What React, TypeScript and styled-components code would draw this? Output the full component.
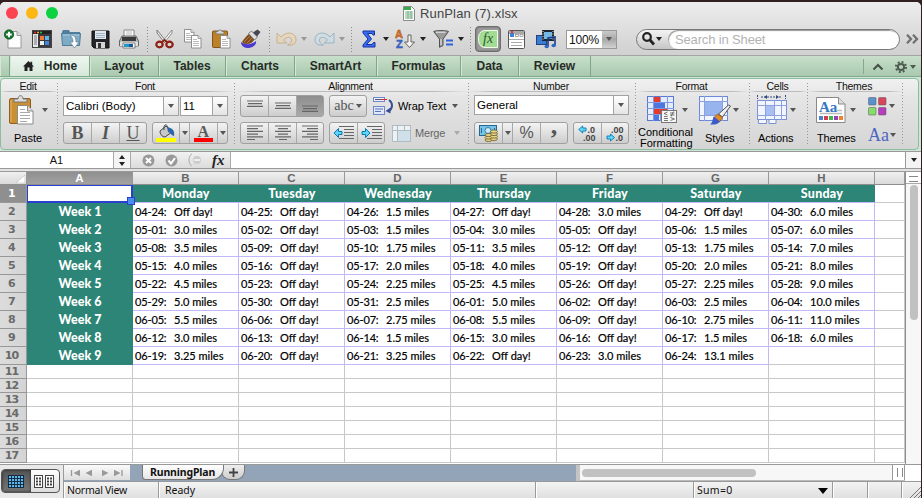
import React from "react";
import styled, { createGlobalStyle, css } from "styled-components";

const UI = '"Liberation Sans", Arial, sans-serif';
const CELL = 'Lato, "Open Sans", sans-serif';
const LUCIDA = '"Noto Sans", "Open Sans", sans-serif';

const Global = createGlobalStyle`
  * { box-sizing: border-box; }
  body { margin: 0; background: #31201f; overflow: hidden; }
  svg { display: block; flex: none; }
`;

const Window = styled.div`
  width: 921px;
  height: 496px;
  margin-top: 2px;
  display: flex;
  flex-direction: column;
  background: #e4e4e4;
  border-radius: 5px 5px 0 0;
  overflow: hidden;
  font-family: ${UI};
  color: #111;
`;

/* ---------- title and toolbar ---------- */
const Chrome = styled.header`
  height: 54px;
  flex: none;
  background: linear-gradient(#ededed, #d0d0d0);
  border-bottom: 1px solid #a4a4a4;
`;
const TitleBar = styled.div`
  display: grid;
  grid-template-columns: 403px 1fr;
  height: 22px;
  align-items: center;
`;
const Lights = styled.div`
  display: flex;
  gap: 8px;
  padding-left: 6px;
`;
const Light = styled.i<{ $c: string }>`
  width: 12px;
  height: 12px;
  border-radius: 50%;
  background: ${(p) => p.$c};
`;
const Title = styled.div`
  display: flex;
  align-items: center;
  gap: 5px;
  font-size: 13px;
  letter-spacing: 0.15px;
  color: #444;
`;
const Toolbar = styled.div`
  display: flex;
  height: 30px;
  align-items: center;
  padding-left: 4px;
`;
const Slot = styled.div<{ $w: number; $ml?: number; $dim?: boolean }>`
  flex: none;
  width: ${(p) => p.$w}px;
  margin-left: ${(p) => p.$ml ?? 0}px;
  display: flex;
  justify-content: center;
  opacity: ${(p) => (p.$dim ? 0.45 : 1)};
`;
const Dots = styled.div<{ $ml?: number }>`
  flex: none;
  width: 1px;
  height: 25px;
  margin-left: ${(p) => p.$ml ?? 0}px;
  background: repeating-linear-gradient(#8c8c8c 0 1px, transparent 1px 3px);
`;
const Caret = styled.i<{ $c?: string; $ml?: number; $s?: number }>`
  flex: none;
  width: 0;
  height: 0;
  margin-left: ${(p) => p.$ml ?? 0}px;
  border: ${(p) => p.$s ?? 3}px solid transparent;
  border-top: ${(p) => (p.$s ?? 3) + 1}px solid ${(p) => p.$c ?? "#555"};
  border-bottom: 0;
`;
const FxToggle = styled.div`
  width: 26px;
  height: 26px;
  margin-left: 4px;
  border: 1px solid #6d6d6d;
  border-radius: 4px;
  background: #9b9b9b;
  box-shadow: inset 0 0 2px #555;
  display: flex;
  align-items: center;
  justify-content: center;
  flex: none;
`;
const Zoom = styled.div`
  display: flex;
  margin-left: 9px;
  width: 51px;
  height: 19px;
  flex: none;
  border: 1px solid #999;
  background: #fff;
  font-size: 12px;
  letter-spacing: -0.2px;
  line-height: 18px;
  padding-left: 2px;
`;
const ZoomBtn = styled.div`
  margin-left: auto;
  width: 14px;
  background: linear-gradient(#c9c9c9, #a9a9a9 50%, #d2d2d2);
  display: flex;
  align-items: center;
  justify-content: center;
`;
const Search = styled.div`
  display: flex;
  align-items: center;
  margin-left: 19px;
  width: 264px;
  height: 21px;
  flex: none;
  border: 1px solid #777;
  border-radius: 11px;
  background: linear-gradient(#f4f4f4, #c6c6c6);
  padding-left: 5px;
  overflow: hidden;
`;
const SearchInput = styled.div`
  margin-left: 6px;
  height: 19px;
  flex: 1;
  border-radius: 10px;
  background: #fff;
  box-shadow: inset 1px 1px 1px #999;
  color: #b3b3b3;
  font-size: 13px;
  letter-spacing: -0.15px;
  line-height: 20px;
  padding-left: 7px;
`;

/* ---------- tabs ---------- */
const TabBar = styled.nav`
  display: flex;
  height: 21px;
  flex: none;
  background: linear-gradient(#c8dfcb, #a9c9ae);
  border-bottom: 1px solid #85a98d;
`;
const Tab = styled.div<{ $w: number; $active?: boolean }>`
  width: ${(p) => p.$w}px;
  flex: none;
  display: flex;
  align-items: center;
  justify-content: center;
  gap: 10px;
  font-size: 12px;
  font-weight: bold;
  color: #272b28;
  border-right: 1px solid #7fa488;
  box-shadow: inset 1px 0 #d5e8d8;
  ${(p) => p.$active && css`background: linear-gradient(#eff7f0, #d5e8d8); padding-left: 1px;`}
`;
const TabTools = styled.div`
  margin: 3px 5px 2px auto;
  border-left: 1px solid #86a98d;
  padding-left: 8px;
  display: flex;
  align-items: center;
`;

/* ---------- ribbon ---------- */
const RibbonFrame = styled.div`
  height: 74px;
  flex: none;
  background: #cfe6d6;
  padding: 1px 2px 1px 0;
`;
const Ribbon = styled.section`
  height: 72px;
  display: flex;
  border: 1px solid #8dbd9f;
  border-radius: 4px;
  background: linear-gradient(#f0f0f0, #e4e4e4 30%, #d5d5d5);
`;
const Group = styled.div<{ $w: number }>`
  width: ${(p) => p.$w}px;
  flex: none;
  padding-right: 1px;
  background: repeating-linear-gradient(#999 0 1px, transparent 1px 3px) right 4px / 1px 63px no-repeat;
  font-size: 11px;
`;
const GroupTitle = styled.div`
  height: 13px;
  line-height: 14px;
  font-size: 10.5px;
  letter-spacing: -0.25px;
  padding-right: 2px;
  text-align: center;
  color: #111;
  border-bottom: 1px solid;
  border-image: linear-gradient(90deg, transparent, #bbb 15%, #bbb 85%, transparent) 1;
`;
const Row = styled.div<{ $pl?: number; $h?: number; $mt?: number }>`
  display: flex;
  align-items: center;
  height: ${(p) => p.$h ?? 22}px;
  margin-top: ${(p) => p.$mt ?? 0}px;
  padding-left: ${(p) => p.$pl ?? 0}px;
`;
const Select = styled.div<{ $w: number; $ml?: number }>`
  width: ${(p) => p.$w}px;
  margin-left: ${(p) => p.$ml ?? 0}px;
  height: 20px;
  flex: none;
  border: 1px solid #a2a2a2;
  background: #fff;
  display: flex;
  line-height: 18px;
  font-size: 11.5px;
  padding-left: 2px;
  color: #000;
`;
const SelectBtn = styled.div`
  width: 15px;
  margin-left: auto;
  border-left: 1px solid #a2a2a2;
  background: linear-gradient(#fff, #e4e4e4);
  display: flex;
  align-items: center;
  justify-content: center;
`;
const Segment = styled.div<{ $ml?: number }>`
  display: flex;
  height: 22px;
  flex: none;
  margin-left: ${(p) => p.$ml ?? 0}px;
  border: 1px solid #a0a0a0;
  border-radius: 3px;
  background: linear-gradient(#f3f3f3, #cdcdcd);
`;
const Key = styled.div<{ $w: number; $on?: boolean }>`
  width: ${(p) => p.$w}px;
  display: flex;
  align-items: center;
  justify-content: center;
  & + & { border-left: 1px solid #a8a8a8; }
  ${(p) => p.$on && css`background: linear-gradient(#8e8e8e, #a9a9a9);`}
`;
const Glyph = styled.span<{ $it?: boolean; $ul?: boolean; $b?: boolean; $s?: number; $c?: string }>`
  font-family: "Liberation Serif", "Times New Roman", serif;
  font-size: ${(p) => p.$s ?? 18}px;
  line-height: 18px;
  color: ${(p) => p.$c ?? "#555"};
  font-weight: ${(p) => (p.$b ? "bold" : "normal")};
  font-style: ${(p) => (p.$it ? "italic" : "normal")};
  text-decoration: ${(p) => (p.$ul ? "underline" : "none")};
  text-decoration-thickness: 1px;
`;
const Comma = styled(Glyph)`
  margin-top: -15px;
`;
const Label = styled.span<{ $s?: number; $ml?: number; $c?: string; $ls?: number }>`
  font-size: ${(p) => p.$s ?? 12}px;
  margin-left: ${(p) => p.$ml ?? 0}px;
  color: ${(p) => p.$c ?? "#000"};
  letter-spacing: ${(p) => p.$ls ?? 0}px;
  white-space: nowrap;
`;
const Columns = styled.div`
  display: flex;
`;
const Big = styled.div<{ $w: number; $ml?: number }>`
  width: ${(p) => p.$w}px;
  margin-left: ${(p) => p.$ml ?? 0}px;
  flex: none;
  display: flex;
  flex-direction: column;
`;
const BigPic = styled.div<{ $pl?: number }>`
  height: 36px;
  display: flex;
  align-items: center;
  gap: 4px;
  padding-left: ${(p) => p.$pl ?? 0}px;
`;
const BigLabel = styled.div<{ $two?: boolean; $pl?: number; $ls?: number }>`
  font-size: 11px;
  color: #000;
  white-space: nowrap;
  letter-spacing: ${(p) => p.$ls ?? 0}px;
  padding-left: ${(p) => p.$pl ?? 0}px;
  line-height: ${(p) => (p.$two ? 11 : 20)}px;
  margin-top: ${(p) => (p.$two ? -1 : 0)}px;
`;
const LabelLine = styled.div<{ $pl?: number }>`
  padding-left: ${(p) => p.$pl ?? 0}px;
`;

/* ---------- formula bar ---------- */
const FormulaBar = styled.div`
  height: 18px;
  flex: none;
  display: flex;
  background: #fff;
  border-top: 1px solid #999;
  border-bottom: 1px solid #999;
`;
const NameBox = styled.div`
  width: 113px;
  text-align: center;
  font-size: 11px;
  line-height: 17px;
`;
const Stepper = styled.div`
  width: 18px;
  border-left: 1px solid #aaa;
  border-right: 1px solid #aaa;
  background: #f4f4f4;
  display: flex;
  align-items: center;
  justify-content: center;
`;
const FxTools = styled.div`
  width: 100px;
  padding-left: 11px;
  background: linear-gradient(#f1f1f1, #dcdcdc);
  border-right: 1px solid #aaa;
  display: flex;
  align-items: center;
  gap: 10px;
`;
const FormulaDrop = styled.div`
  width: 16px;
  margin-left: auto;
  border-left: 1px solid #999;
  background: #f4f4f4;
  display: flex;
  align-items: center;
  justify-content: center;
`;
const Strip = styled.div`
  height: 3px;
  flex: none;
  background: #e3e3e3;
  border-bottom: 1px solid #999;
`;

/* ---------- sheet ---------- */
const SheetArea = styled.main`
  display: flex;
  height: 292px;
  flex: none;
  background: #fff;
`;
const Grid = styled.div`
  display: grid;
  width: 905px;
  grid-template-columns: 27px repeat(8, 106px) 30px;
  grid-template-rows: 13px repeat(10, 18px) repeat(7, 14px) 1px;
  overflow: hidden;
`;
const ColHead = styled.div<{ $on?: boolean }>`
  display: flex;
  align-items: center;
  justify-content: center;
  font: bold 11.5px/12px ${UI};
  color: ${(p) => (p.$on ? "#fff" : "#666")};
  background: ${(p) => (p.$on ? "linear-gradient(#8f8f8f, #a2a2a2)" : "linear-gradient(#f0f0f0, #dadada)")};
  border-right: 1px solid #989898;
  border-bottom: 1px solid #8e8e8e;
`;
const Corner = styled(ColHead)`
  justify-content: flex-end;
  align-items: flex-end;
  padding: 0 1px 1px 0;
`;
const RowHead = styled.div<{ $on?: boolean }>`
  display: flex;
  align-items: center;
  justify-content: center;
  padding-right: 3px;
  font: bold 11px/12px "DejaVu Sans", sans-serif;
  letter-spacing: -0.8px;
  color: ${(p) => (p.$on ? "#fff" : "#6a6a6a")};
  background: ${(p) => (p.$on ? "#8f8f8f" : "linear-gradient(90deg, #dcdcdc, #d4d4d4)")};
  border-right: 1px solid #989898;
  border-bottom: 1px solid #989898;
`;
const Cell = styled.div<{ $line?: string }>`
  display: grid;
  grid-template-columns: 39px 1fr;
  padding-left: 2px;
  font: 11px/17px ${CELL};
  color: #000;
  -webkit-text-stroke: 0.2px #000;
  white-space: nowrap;
  border-right: 1px solid ${(p) => p.$line ?? "#c8c8c8"};
  border-bottom: 1px solid ${(p) => p.$line ?? "#c8c8c8"};
`;
const DateText = styled.span`
  letter-spacing: -0.15px;
`;
const HeadCell = styled.div<{ $lined?: boolean }>`
  background: #2c8576;
  color: #fff;
  text-align: center;
  font: 900 12.5px/17px ${CELL};
  letter-spacing: ${(p) => (p.$lined ? 0.25 : 0)}px;
  border-bottom: 1px solid ${(p) => (p.$lined ? "#c3b9fa" : "#2c8576")};
`;
const Selected = styled.div`
  position: relative;
  background: #fff;
  border: 1px solid #2a3fcf;
  border-bottom-width: 2px;
  border-right-width: 2px;
  &::after {
    content: "";
    position: absolute;
    right: -4px;
    bottom: -4px;
    width: 6px;
    height: 6px;
    background: #4a8cf0;
    border: 1px solid #2a3fcf;
    z-index: 2;
  }
`;
const VScroll = styled.div`
  width: 16px;
  border-left: 1px solid #8e8e8e;
  background: #f7f7f7;
  display: flex;
  flex-direction: column;
`;
const VSplit = styled.div`
  height: 12px;
  flex: none;
  border-bottom: 1px solid #aaa;
  padding: 4px 3px;
  background: #fff;
  &::before {
    content: "";
    display: block;
    height: 4px;
    border-top: 1px solid #888;
    border-bottom: 1px solid #888;
  }
`;
const VThumb = styled.div`
  width: 8px;
  height: 135px;
  margin: 1px 0 0 4px;
  border-radius: 4px;
  background: #c1c1c1;
`;

/* ---------- bottom ---------- */
const Footer = styled.footer`
  display: grid;
  grid-template-columns: 64px 1fr;
  height: 34px;
  flex: none;
  border-top: 1px solid #999;
`;
const Views = styled.div`
  background: #e9e9e9;
  border-right: 1px solid #999;
  padding: 4px 0 0 1px;
`;
const ViewSwitch = styled.div`
  width: 59px;
  height: 24px;
  border: 1px solid #555;
  border-radius: 4px;
  display: flex;
  overflow: hidden;
  background: linear-gradient(#fff, #dcdcdc);
`;
const ViewBtn = styled.div<{ $on?: boolean }>`
  flex: 1;
  display: flex;
  align-items: center;
  justify-content: center;
  ${(p) => p.$on && css`background: linear-gradient(#555, #777); box-shadow: inset 0 0 3px #222;`}
`;
const FooterMain = styled.div`
  display: flex;
  flex-direction: column;
`;
const SheetBar = styled.div`
  display: flex;
  height: 16px;
  background: #94a4b8;
`;
const NavKeys = styled.div`
  width: 66px;
  height: 15px;
  background: linear-gradient(#fafafa, #dedede);
  display: flex;
  align-items: center;
  justify-content: center;
`;
const SheetTab = styled.div`
  width: 82px;
  height: 15px;
  margin-left: 12px;
  background: linear-gradient(#fff, #e6e6e6);
  border: 1px solid #777;
  border-top: 0;
  border-radius: 0 0 12px 4px;
  font: bold 10.5px/14px ${LUCIDA};
  letter-spacing: -0.15px;
  padding-left: 7px;
  color: #111;
  z-index: 1;
`;
const AddTab = styled.div`
  width: 24px;
  height: 15px;
  margin-left: -3px;
  border: 1px solid #777;
  border-top: 0;
  border-radius: 0 0 9px 9px;
  background: linear-gradient(#eee, #ccc);
  display: flex;
  align-items: center;
  justify-content: center;
`;
const HScroll = styled.div`
  margin-left: auto;
  width: 329px;
  background: #f7f7f7;
  display: flex;
  border-left: 4px solid #c4c4c4;
  border-bottom: 1px solid #bbb;
`;
const HThumb = styled.div`
  width: 174px;
  height: 8px;
  margin: 4px 0 0 2px;
  border-radius: 4px;
  background: #c1c1c1;
`;
const HSplit = styled.div`
  margin-left: auto;
  width: 13px;
  border-left: 1px solid #999;
  border-right: 1px solid #999;
  padding: 3px 4px;
  background: #fff;
  &::before {
    content: "";
    display: block;
    width: 4px;
    height: 9px;
    border-left: 1px solid #888;
    border-right: 1px solid #888;
  }
`;
const ScrollCorner = styled.div`
  width: 16px;
  background: #fff;
`;
const Status = styled.div`
  flex: 1;
  display: flex;
  border-top: 1px solid #999;
  background: linear-gradient(#f3f3f3, #dedede);
  font: 10.5px/17px ${LUCIDA};
`;
const StatusCell = styled.div<{ $w?: number; $pl?: number; $ls?: number }>`
  ${(p) => (p.$w ? css`width: ${p.$w}px; flex: none;` : css`flex: 1;`)}
  padding: 0 4px 0 ${(p) => p.$pl ?? 3}px;
  letter-spacing: ${(p) => p.$ls ?? 0}px;
  white-space: nowrap;
  border-right: 1px solid #999;
  box-shadow: inset 1px 0 #fff;
  display: flex;
  align-items: center;
  justify-content: space-between;
`;
const ResizeCell = styled(StatusCell)`
  justify-content: flex-end;
  align-items: flex-end;
  padding: 0;
  border-right: 0;
`;

/* ---------- icons ---------- */
type SvgP = { w: number; h: number; children: React.ReactNode };
const Svg = ({ w, h, children }: SvgP) => (
  <svg width={w} height={h} viewBox={`0 0 ${w} ${h}`} fill="none">{children}</svg>
);

const DocIcon = () => (
  <Svg w={12} h={15}>
    <path d="M.5 .5h8l3 3v11H.5z" fill="#fff" stroke="#8a8a8a" />
    <path d="M1 1h7v3H1z" fill="#37ab4c" />
    <path d="M2 6h8M2 8h8M2 10h8M2 12h8M5 5v8M8 5v8" stroke="#79b184" />
  </Svg>
);
const NewIcon = () => (
  <Svg w={18} h={20}>
    <path d="M4 2.5h9l4 4V19H4z" fill="#fdfdfd" stroke="#9a9a9a" />
    <path d="M13 2.5v4h4" fill="#ddd" stroke="#9a9a9a" />
    <circle cx="5" cy="5.5" r="4.7" fill="#16752e" stroke="#0d4d1d" strokeWidth=".7" />
    <path d="M5 2.7v5.6M2.2 5.5h5.6" stroke="#fff" strokeWidth="2" />
  </Svg>
);
const GalleryIcon = () => (
  <Svg w={20} h={18}>
    <rect x=".5" y=".5" width="19" height="17" fill="#e8e8e8" stroke="#444" />
    <rect x="1" y="1" width="18" height="3" fill="#222" />
    <circle cx="3" cy="2.5" r="1" fill="#e33" /><circle cx="6" cy="2.5" r="1" fill="#fb2" /><circle cx="9" cy="2.5" r="1" fill="#3c4" />
    <rect x="6" y="4" width="13" height="13" fill="#3b3b3f" />
    <path d="M2 6h3M2 8h3M2 10h3M2 12h3M2 14h3" stroke="#777" />
    <rect x="8" y="6" width="4" height="4" fill="#f57b34" /><rect x="13" y="6" width="4" height="4" fill="#5db6ee" />
    <rect x="8" y="11" width="4" height="4" fill="#eee" /><rect x="13" y="11" width="4" height="4" fill="#3c86dc" />
  </Svg>
);
const FolderIcon = () => (
  <Svg w={21} h={20}>
    <path d="M1 3l1-2h6l1 2h10v2H1z" fill="#4f7f9e" />
    <path d="M.5 4.5h19l-1 12h-17z" fill="#7eabc6" stroke="#4d7a97" />
    <path d="M2 6h16" stroke="#a9cbdd" />
    <path d="M9 6c5 0 6 3 6 7h3l-4.500 6L9 13h3c0-3-1-5-3-7z" fill="#fff" stroke="#607f91" strokeWidth=".7" />
  </Svg>
);
const SaveIcon = () => (
  <Svg w={19} h={19}>
    <path d="M1 1h17v17H3l-2-2z" fill="#24252a" stroke="#111" />
    <rect x="4" y="1" width="11" height="8" fill="#dfe8f1" />
    <path d="M5 3.500h9M5 5.500h9M5 7.500h9" stroke="#94a5b5" strokeWidth=".8" />
    <rect x="5" y="12" width="9" height="6" fill="#d5d5d5" /><rect x="7" y="13" width="3" height="5" fill="#333" />
  </Svg>
);
const PrintIcon = () => (
  <Svg w={20} h={20}>
    <path d="M5 8V1h10v7" fill="#fff" stroke="#888" />
    <path d="M7 3h6M7 5h6" stroke="#bbb" />
    <path d="M3 7h14l2.500 5v5H.5v-5z" fill="#b9b9b9" stroke="#666" />
    <rect x="3" y="8" width="14" height="4" fill="#3a3a3a" />
    <path d="M1 13h18v4H1z" fill="#e0e0e0" />
    <path d="M4 14h12v5H4z" fill="#fff" stroke="#555" strokeWidth=".7" />
    <path d="M5 15h5v3H5z" fill="#1b9ccb" /><path d="M10 15h4v3h-4z" fill="#1a5597" />
  </Svg>
);
const CutIcon = () => (
  <Svg w={19} h={20}>
    <path d="M2 1l9 11-1.500 1.500L2 4z" fill="#e5e5e5" stroke="#666" strokeWidth=".8" />
    <path d="M17 1L8 12l1.500 1.500L17 4z" fill="#fafafa" stroke="#777" strokeWidth=".8" />
    <ellipse cx="4.500" cy="15.500" rx="3.200" ry="2.800" stroke="#8e1f12" strokeWidth="2.200" />
    <ellipse cx="14.500" cy="15.500" rx="3.200" ry="2.800" stroke="#8e1f12" strokeWidth="2.200" />
    <path d="M7 13l2.500-2 2.500 2" stroke="#8e1f12" strokeWidth="2" />
  </Svg>
);
const Page = ({ x, y }: { x: number; y: number }) => (
  <g transform={`translate(${x} ${y})`}>
    <path d="M.5 .5h6.500l3 3v9.500H.5z" fill="#fff" stroke="#858585" strokeWidth=".9" />
    <path d="M7 .5v3h3" fill="#ddd" stroke="#858585" strokeWidth=".7" />
    <path d="M2 4.500h4M2 6.500h6M2 8.500h6M2 10.500h6" stroke="#aaa" strokeWidth=".8" />
  </g>
);
const CopyIcon = () => <Svg w={19} h={20}><Page x={1} y={0} /><Page x={8} y={6} /></Svg>;
const PasteIcon = () => (
  <Svg w={19} h={20}>
    <rect x=".5" y="2" width="15" height="16.500" rx="1" fill="#bd8128" stroke="#83551a" />
    <path d="M4 5V2.500h2C6 .5 10 .5 10 2.500h2V5z" fill="#d6d6d6" stroke="#6e6e6e" strokeWidth=".8" />
    <Page x={8} y={6} />
  </Svg>
);
const BrushIcon = () => (
  <Svg w={21} h={20}>
    <path d="M1 13c5 3 10 3 15-1 1 4-4 7.500-9 7-4-.5-6-3-6-6z" fill="#4a3ad0" />
    <path d="M2 13c2-3 4-6 7-8l5.500 5.500c-2 3-4.500 4.500-7.500 4.500-2 0-4-1-5-2z" fill="#7f4d22" />
    <path d="M4 13l6-6M7 14l5-5" stroke="#bb7c3d" />
    <path d="M8.500 4.500L11.500 2l6 6-3 3z" fill="#dedede" stroke="#555" strokeWidth=".7" />
    <path d="M13 3.500L17.500 .5l3 2.500-3.500 4.500z" fill="#464650" />
  </Svg>
);
const Undo = () => (
  <Svg w={21} h={16}>
    <path d="M1 2v10h10L7.500 9C11 5 15.500 6 15.500 9c0 2-1 4-4 5 6 1 9-2 8.500-6C19.500 1 10 0 5 6z" fill="#f2d29a" stroke="#b5823a" />
  </Svg>
);
const Redo = () => (
  <Svg w={21} h={16}>
    <path d="M20 2v10H10l3.500-3C10 5 5.500 6 5.500 9c0 2 1 4 4 5-6 1-9-2-8.500-6C1.500 1 11 0 16 6z" fill="#c3dfed" stroke="#4f88ab" />
  </Svg>
);
const Sigma = () => (
  <Svg w={14} h={18}>
    <path d="M1 1h11.500v4H11l-1-1.500H5.500L9.500 9l-5 5.500H10l1.500-2H13V17H1v-2l5-6-5-6z" fill="#3a6cf0" stroke="#1432a8" />
  </Svg>
);
const SortIcon = () => (
  <Svg w={21} h={22}>
    <text x="0" y="10" fontFamily="Liberation Sans" fontWeight="bold" fontSize="11" fill="#dd7426" stroke="#9a4610" strokeWidth=".4">A</text>
    <text x="1" y="20" fontFamily="Liberation Sans" fontWeight="bold" fontSize="11" fill="#3f74dd" stroke="#1f409a" strokeWidth=".4">Z</text>
    <path d="M13 7h3v7h3.500l-5 5.500-5-5.500H13z" fill="#f2f2f2" stroke="#555" strokeWidth=".9" />
  </Svg>
);
const FunnelIcon = () => (
  <Svg w={21} h={18}>
    <path d="M.7 1.500C3 .3 13 .3 15.500 1.500L10 9v6.500l-3.500 1.800V9z" fill="#999" stroke="#4f4f4f" />
    <path d="M3 2.200h9.500" stroke="#eee" /><path d="M8 9v6" stroke="#eee" />
    <path d="M13 10.500h7M13 14.500h7" stroke="#2f63d9" strokeWidth="2" />
  </Svg>
);
const FxIcon = () => (
  <Svg w={20} h={18}>
    <path d="M7 .5h12.500v17H7C2 17.500.5 13 .5 9S2 .5 7 .5z" fill="#a5dc94" stroke="#f1fbee" />
    <text x="5" y="13" fontFamily="Liberation Serif" fontStyle="italic" fontSize="14" fill="#1f5c2a">fx</text>
  </Svg>
);
const ToolboxIcon = () => (
  <Svg w={17} h={19}>
    <rect x=".5" y=".5" width="16" height="18" rx="1" fill="#fff" stroke="#555" />
    <rect x="1" y="1" width="15" height="3" fill="#a9a9a9" />
    <rect x="2" y="3" width="4" height="4" fill="#3b82dc" /><circle cx="4" cy="2" r="1.200" fill="#e33" />
    <rect x="7.500" y="4.500" width="3" height="2" stroke="#888" strokeWidth=".7" /><rect x="12" y="4.500" width="3" height="2" stroke="#888" strokeWidth=".7" />
    <path d="M1 9.500h15M3 12.500h11M3 15.500h11" stroke="#aaa" />
  </Svg>
);
const MediaIcon = () => (
  <Svg w={21} h={19}>
    <rect x=".5" y="5.500" width="10" height="9" fill="#3c7bd0" stroke="#1c4489" />
    <rect x="6" y="0" width="12" height="11" fill="#1c2630" /><rect x="8" y="2" width="8" height="7" fill="#76b8df" />
    <path d="M7 1v10M17 1v10" stroke="#ddd" strokeDasharray="1 1.500" />
    <path d="M12 16V8l7-1v8" stroke="#173c86" strokeWidth="1.600" />
    <ellipse cx="10.700" cy="16.500" rx="2.200" ry="1.700" fill="#2e66c5" /><ellipse cx="17.700" cy="15.500" rx="2.200" ry="1.700" fill="#2e66c5" />
  </Svg>
);
const Magnifier = () => (
  <Svg w={13} h={14}>
    <circle cx="5" cy="5" r="3.800" stroke="#222" strokeWidth="2.200" /><path d="M8 8l4 4.500" stroke="#222" strokeWidth="2.800" />
  </Svg>
);
const More = () => (
  <Svg w={13} h={10}>
    <path d="M1 .8L5 5 1 9.200M7 .8L11 5 7 9.200" stroke="#707070" strokeWidth="2.300" />
  </Svg>
);
const HomeIcon = () => (
  <Svg w={11} h={10}>
    <path d="M5.500 0L7.500 2V.7h1.700v3L11 5.500H9.500V10h-3V6.500h-2V10h-3V5.500H0z" fill="#222" />
  </Svg>
);
const ChevronUp = () => <Svg w={12} h={8}><path d="M1.500 6.500L6 2l4.500 4.500" stroke="#445047" strokeWidth="2" /></Svg>;
const Gear = () => (
  <Svg w={12} h={12}>
    <circle cx="6" cy="6" r="3.100" stroke="#4e5b51" strokeWidth="2" />
    <circle cx="6" cy="6" r="5" stroke="#4e5b51" strokeWidth="2" strokeDasharray="1.960 1.960" />
  </Svg>
);
const BigPaste = () => (
  <Svg w={25} h={30}>
    <rect x=".5" y="3.500" width="21" height="25" rx="1.500" fill="#c98f32" stroke="#8d5e1e" />
    <path d="M2 5v22" stroke="#e2b567" />
    <path d="M5 7V4h4C9-.5 14-.5 14 4h4v3z" fill="#dcdcdc" stroke="#777" />
    <path d="M8.500 10.500h10l5.500 5.500v13H8.500z" fill="#fff" stroke="#8b8b8b" />
    <path d="M18.500 10.500V16H24" fill="#ddd" stroke="#8b8b8b" />
    <path d="M11 14.500h5M11 17.500h10M11 20.500h10M11 23.500h10M11 26.500h7" stroke="#a9a9a9" />
  </Svg>
);
const BucketIcon = () => (
  <Svg w={20} h={18}>
    <path d="M4 7l6-5 6 6-7 5c-3 0-5-3-5-6z" fill="#c8c8c8" stroke="#444" />
    <path d="M8 6C7 0 11-1 12 4" stroke="#444" /><path d="M11 3c6 1 8 4 7 9-2 0-3-3-6-4z" fill="#2c66a8" />
    <rect x="0" y="14" width="20" height="4" fill="#ff0" />
  </Svg>
);
const FontColor = () => (
  <Svg w={19} h={18}>
    <text x="3.500" y="13" fontFamily="Liberation Serif" fontWeight="bold" fontSize="16" fill="#5a5a5a">A</text>
    <rect x="0" y="14" width="19" height="4" fill="#f00" />
  </Svg>
);
const Lines = ({ rows, y = 2, color = "#666" }: { rows: [number, number][]; y?: number; color?: string }) => (
  <Svg w={18} h={18}>
    {rows.map(([a, b], i) => <path key={i} d={`M${a} ${y + i * 2.700}H${b}`} stroke={color} strokeWidth="1.200" />)}
  </Svg>
);
const full: [number, number] = [1, 17];
const Indent = ({ flip }: { flip?: boolean }) => (
  <Svg w={21} h={16}>
    <path d="M6 1.500h15M11 4.500h10M11 7.500h10M11 10.500h10M6 13.500h15" stroke="#666" />
    <path d={flip ? "M9 8L4.500 3.500v3H1v3h3.500v3z" : "M1 8l4.500-4.500v3H9v3H5.500v3z"} fill="#5fd4f7" stroke="#0879b4" />
  </Svg>
);
const WrapIcon = () => (
  <Svg w={21} h={18}>
    <rect x=".5" y=".5" width="11" height="4" fill="#eef3ff" stroke="#6f88c8" /><path d="M2 2.500h7" stroke="#557" /><path d="M9 2.500h5" stroke="#e22" />
    <rect x=".5" y="9.500" width="11" height="8" fill="#dfe9fb" stroke="#6f88c8" /><path d="M2 12h8M2 14.500h6" stroke="#5672b5" />
    <path d="M16 3c4 3 4 8 0 11" stroke="#3b4d94" strokeWidth="2" /><path d="M12.500 14l5-3.500v6z" fill="#3b4d94" />
  </Svg>
);
const MergeIcon = () => (
  <Svg w={19} h={17}>
    <rect x=".5" y=".5" width="18" height="16" fill="#eef1f3" stroke="#afbbc2" />
    <path d="M5.500 1v15M1 5.500h17M12.500 1v5" stroke="#afbbc2" /><rect x="6" y="6" width="12" height="10" fill="#cfe0eb" />
  </Svg>
);
const MoneyIcon = () => (
  <Svg w={20} h={17}>
    <rect x=".5" y=".5" width="17" height="10" fill="#75c3ea" stroke="#23668f" />
    <circle cx="9" cy="5.500" r="3" fill="#c7ebfa" stroke="#23668f" strokeWidth=".8" /><path d="M2.500 3v5M15.500 3v5" stroke="#2b6b94" />
    {[15, 12.500, 10].map((y) => <ellipse key={y} cx="9.500" cy={y} rx="3.500" ry="1.600" fill="#e0cd83" stroke="#70602a" strokeWidth=".8" />)}
    {[14, 11.500, 9, 6.500].map((y) => <ellipse key={y} cx="15" cy={y} rx="3.500" ry="1.600" fill="#e6d48c" stroke="#70602a" strokeWidth=".8" />)}
  </Svg>
);
const Decimals = ({ more }: { more?: boolean }) => (
  <Svg w={19} h={17}>
    <g fontFamily="Liberation Sans" fontWeight="bold" fontSize="9" fill="#444">
      <text x={more ? 5 : 9.500} y="7.500">{more ? ".00" : ".0"}</text><text x={more ? 9.500 : 5} y="16">{more ? ".0" : ".00"}</text>
    </g>
    <path d={more ? "M8.500 12.500L4.500 9v2H1v3h3.500v2z" : "M.7 4.500l4-3.500v2H8v3H4.700v2z"} fill="#62d7f8" stroke="#0879b4" strokeWidth=".9" />
  </Svg>
);
const CondIcon = () => (
  <Svg w={31} h={28}>
    <rect x=".5" y=".5" width="26" height="24" fill="#e4ecff" stroke="#5c78ce" />
    <rect x="7" y="1" width="6" height="6" fill="#e63b2c" /><rect x="7" y="7" width="11" height="6" fill="#4d77df" />
    <rect x="7" y="13" width="13" height="6" fill="#e63b2c" /><rect x="7" y="19" width="5" height="6" fill="#4d77df" />
    <path d="M6.500 0v25M13.500 0v6M13.500 19v6M20.500 0v25M0 6.500h27M0 12.500h27M0 18.500h27" stroke="#7f98e0" />
    <rect x="14.500" y="14.500" width="15" height="12" fill="#f7f7f7" stroke="#777" />
    <path d="M20.500 16l-3.500 1.500 3.500 1.500M17 20.500h3.500M23 17h4.500M23 19h4.500M26.500 15.500l-2.500 5M17 22.500h4M17 24.500h4M23.500 21.500l4 1.500-4 1.500" stroke="#555" strokeWidth=".8" />
  </Svg>
);
const StylesIcon = () => (
  <Svg w={33} h={31}>
    <rect x=".5" y="1.500" width="28" height="24" fill="#f0f5ff" stroke="#6d88d8" />
    <path d="M5.500 1v25M23.500 1v25M0 6.500h29M0 20.500h29" stroke="#8ba1df" /><rect x="6" y="7" width="17" height="13" fill="#96b4ee" />
    <path d="M31.500 11l-8 11-4-3 10-9z" fill="#eee" stroke="#555" />
    <path d="M18.500 19l5 3.500-3 4.500-6-4z" fill="#e28a22" stroke="#8e4e10" strokeWidth=".7" />
    <path d="M15 21.500l6 5C18 30.500 14 29.500 11 29.500c3-2 2-5 4-8z" fill="#3b5bcb" />
  </Svg>
);
const ActionsIcon = () => (
  <Svg w={31} h={30}>
    <path d="M.5 0v4M28.500 0v4M4 2h21" stroke="#334a7a" strokeDasharray="2 1" /><path d="M7 2l3-2v4zM22 2l-3-2v4z" fill="#334a7a" />
    <rect x=".5" y="5.500" width="29" height="19" fill="#f1f5ff" stroke="#7b90d6" />
    <path d="M1.500 24.500h8v4h-8zM12 24.500h7v4h-7z" fill="#f5f7ff" stroke="#7b90d6" />
    <path d="M8.500 5v20M17.500 5v20M24.500 5v20M0 10.500h30M0 20.500h30" stroke="#8fa2de" /><rect x="9" y="11" width="8" height="9" fill="#a9bff3" />
  </Svg>
);
const ThemesIcon = () => (
  <Svg w={30} h={27}>
    <path d="M.5 .5h22l6.500 6.500v18.500H.5z" fill="#fff" stroke="#888" /><path d="M22.500 .5V7H29" fill="#ddd" stroke="#888" />
    <text x="3" y="15" fontFamily="Liberation Serif" fontSize="15" fontWeight="bold" fill="#3477c4">Aa</text>
    <path d="M21 13.500h5M4 16.500h22" stroke="#bbb" strokeWidth="1.500" />
    {["#4b83c4", "#d33d4e", "#3fb54b", "#9b3eb8", "#ef8133"].map((c, i) => <rect key={c} x={3 + i * 5} y="19" width="4" height="4" fill={c} />)}
  </Svg>
);
const Swatches = () => (
  <Svg w={19} h={19}>
    {[["#5b91cc", 0, 0], ["#d7465a", 10, 0], ["#86dd6b", 0, 10], ["#b63dbb", 10, 10]].map(([c, x, y]) => (
      <rect key={c} x={Number(x) + 0.5} y={Number(y) + 0.5} width="7.500" height="7.500" rx="1" fill={String(c)} stroke="#555" strokeOpacity=".5" />
    ))}
  </Svg>
);
const UpDown = () => <Svg w={6} h={11}><path d="M3 0l3 4H0zM3 11l3-4H0z" fill="#222" /></Svg>;
const Round = ({ ok }: { ok?: boolean }) => (
  <Svg w={13} h={13}>
    <circle cx="6.500" cy="6.500" r="6" fill="#999" />
    <path d={ok ? "M3.500 6.500l2.500 3 4-5.500" : "M4 4l5 5M9 4l-5 5"} stroke="#fff" strokeWidth="2" />
  </Svg>
);
const HalfRound = () => (
  <Svg w={14} h={14}>
    <path d="M4 .8C0 3 0 11 4 13.200" stroke="#aaa" /><circle cx="9" cy="7" r="4" fill="#ccc" /><path d="M6 7h6" stroke="#eee" strokeWidth="2" />
  </Svg>
);
const NavIcon = () => (
  <Svg w={54} h={8}>
    <path d="M1.500 1v6M52 1v6" stroke="#999" strokeWidth="1.300" />
    <path d="M10 .8v6.400L3.500 4zM22 .8v6.400L15.500 4zM32 .8v6.400L38.500 4zM44 .8v6.400L50.500 4z" fill="#999" />
  </Svg>
);
const NormalView = () => (
  <Svg w={16} h={13}>
    <rect x="0" y="0" width="16" height="13" fill="#122c42" />
    {[1, 4, 7, 10].map((y) => <path key={y} d={`M1 ${y + 1}h14`} stroke="#5db8f0" strokeWidth="2" strokeDasharray="2 1" />)}
  </Svg>
);
const LayoutView = () => (
  <Svg w={21} h={13}>
    {[0.5, 11.5].map((x) => (
      <g key={x}>
        <rect x={x} y=".5" width="8" height="12" fill="#fff" stroke="#444" />
        <path d={`M${x + 1.500} 3.500h5.500M${x + 1.500} 6.500h5.500M${x + 1.500} 9.500h5.500`} stroke="#444" strokeWidth="2" strokeDasharray="2 1" />
      </g>
    ))}
  </Svg>
);
const Grip = () => <Svg w={12} h={13}><path d="M1 12L12 1M5 12l7-7M9 12l3-3" stroke="#777" /></Svg>;

/* ---------- data ---------- */
const days = ["Monday", "Tuesday", "Wednesday", "Thursday", "Friday", "Saturday", "Sunday"];
const OFF = "Off day!";
const plan: [string, string][][] = [
  [["04-24", OFF], ["04-25", OFF], ["04-26", "1.5"], ["04-27", OFF], ["04-28", "3.0"], ["04-29", OFF], ["04-30", "6.0"]],
  [["05-01", "3.0"], ["05-02", OFF], ["05-03", "1.5"], ["05-04", "3.0"], ["05-05", OFF], ["05-06", "1.5"], ["05-07", "6.0"]],
  [["05-08", "3.5"], ["05-09", OFF], ["05-10", "1.75"], ["05-11", "3.5"], ["05-12", OFF], ["05-13", "1.75"], ["05-14", "7.0"]],
  [["05-15", "4.0"], ["05-16", OFF], ["05-17", "2.0"], ["05-18", "4.0"], ["05-19", OFF], ["05-20", "2.0"], ["05-21", "8.0"]],
  [["05-22", "4.5"], ["05-23", OFF], ["05-24", "2.25"], ["05-25", "4.5"], ["05-26", OFF], ["05-27", "2.25"], ["05-28", "9.0"]],
  [["05-29", "5.0"], ["05-30", OFF], ["05-31", "2.5"], ["06-01", "5.0"], ["06-02", OFF], ["06-03", "2.5"], ["06-04", "10.0"]],
  [["06-05", "5.5"], ["06-06", OFF], ["06-07", "2.75"], ["06-08", "5.5"], ["06-09", OFF], ["06-10", "2.75"], ["06-11", "11.0"]],
  [["06-12", "3.0"], ["06-13", OFF], ["06-14", "1.5"], ["06-15", "3.0"], ["06-16", OFF], ["06-17", "1.5"], ["06-18", "6.0"]],
  [["06-19", "3.25"], ["06-20", OFF], ["06-21", "3.25"], ["06-22", OFF], ["06-23", "3.0"], ["06-24", "13.1"]],
];
const tabs: [string, number][] = [["Layout", 69], ["Tables", 67], ["Charts", 69], ["SmartArt", 82], ["Formulas", 84], ["Data", 58], ["Review", 72]];

export default function App() {
  return (
    <>
      <Global />
      <Window>
        <Chrome>
          <TitleBar>
            <Lights><Light $c="#fc4450" /><Light $c="#fdb713" /><Light $c="#0fd242" /></Lights>
            <Title><DocIcon />RunPlan (7).xlsx</Title>
          </TitleBar>
          <Toolbar>
            <Slot $w={18}><NewIcon /></Slot>
            <Slot $w={20} $ml={10}><GalleryIcon /></Slot>
            <Slot $w={21} $ml={9}><FolderIcon /></Slot>
            <Slot $w={19} $ml={9}><SaveIcon /></Slot>
            <Slot $w={20} $ml={9}><PrintIcon /></Slot>
            <Dots $ml={8} />
            <Slot $w={19} $ml={7}><CutIcon /></Slot>
            <Slot $w={19} $ml={9}><CopyIcon /></Slot>
            <Slot $w={19} $ml={10}><PasteIcon /></Slot>
            <Slot $w={21} $ml={9}><BrushIcon /></Slot>
            <Dots $ml={8} />
            <Slot $w={21} $ml={6} $dim><Undo /></Slot>
            <Caret $ml={4} $c="#999" />
            <Slot $w={21} $ml={7} $dim><Redo /></Slot>
            <Caret $ml={4} $c="#999" />
            <Dots $ml={6} />
            <Slot $w={14} $ml={10}><Sigma /></Slot>
            <Caret $ml={7} $c="#222" />
            <Slot $w={21} $ml={6}><SortIcon /></Slot>
            <Caret $ml={4} $c="#222" />
            <Slot $w={21} $ml={7}><FunnelIcon /></Slot>
            <Caret $ml={4} $c="#222" />
            <Dots $ml={6} />
            <FxToggle><FxIcon /></FxToggle>
            <Slot $w={17} $ml={7}><ToolboxIcon /></Slot>
            <Slot $w={21} $ml={11}><MediaIcon /></Slot>
            <Zoom>100%<ZoomBtn><Caret /></ZoomBtn></Zoom>
            <Search><Magnifier /><Caret $ml={1} $c="#222" /><SearchInput>Search in Sheet</SearchInput></Search>
            <Slot $w={13} $ml={6}><More /></Slot>
          </Toolbar>
        </Chrome>

        <TabBar>
          <Tab $w={10} />
          <Tab $w={80} $active><HomeIcon />Home</Tab>
          {tabs.map(([t, w]) => <Tab key={t} $w={w}>{t}</Tab>)}
          <TabTools><ChevronUp /><Slot $w={12} $ml={11}><Gear /></Slot><Caret $ml={3} $c="#4e5b51" /></TabTools>
        </TabBar>

        <RibbonFrame>
          <Ribbon>
            <Group $w={57}>
              <GroupTitle>Edit</GroupTitle>
              <BigPic $pl={8}><BigPaste /><Caret $ml={4} /></BigPic>
              <BigLabel $pl={13}>Paste</BigLabel>
            </Group>
            <Group $w={177}>
              <GroupTitle>Font</GroupTitle>
              <Row $pl={5} $mt={3}>
                <Select $w={116}>Calibri (Body)<SelectBtn><Caret /></SelectBtn></Select>
                <Select $w={48} $ml={1}>11<SelectBtn><Caret /></SelectBtn></Select>
              </Row>
              <Row $pl={5} $mt={5}>
                <Segment>
                  <Key $w={27}><Glyph $b>B</Glyph></Key><Key $w={28}><Glyph $it $b>I</Glyph></Key><Key $w={27}><Glyph $ul>U</Glyph></Key>
                </Segment>
                <Segment $ml={5}>
                  <Key $w={26}><BucketIcon /></Key><Key $w={10}><Caret /></Key><Key $w={28}><FontColor /></Key><Key $w={10}><Caret /></Key>
                </Segment>
              </Row>
            </Group>
            <Group $w={234}>
              <GroupTitle>Alignment</GroupTitle>
              <Row $pl={5} $mt={3}>
                <Segment>
                  <Key $w={27}><Lines y={4} rows={[full, [2, 16], full]} /></Key>
                  <Key $w={28}><Lines y={6} rows={[full, [2, 16], full]} /></Key>
                  <Key $w={27} $on><Lines y={9} rows={[full, [2, 16], full]} color="#666" /></Key>
                </Segment>
                <Segment $ml={5}><Key $w={36}><Glyph $s={14}>abc</Glyph><Caret $ml={2} /></Key></Segment>
                <Slot $w={21} $ml={6}><WrapIcon /></Slot>
                <Label $ml={4} $s={11} $ls={-0.1}>Wrap Text</Label><Caret $ml={6} />
              </Row>
              <Row $pl={5} $mt={5}>
                <Segment>
                  <Key $w={27}><Lines rows={[full, [1, 12], full, [1, 12], full, [1, 9]]} /></Key>
                  <Key $w={28}><Lines rows={[full, [4, 14], full, [4, 14], full, [5, 13]]} /></Key>
                  <Key $w={27}><Lines rows={[full, [6, 17], full, [6, 17], full, [9, 17]]} /></Key>
                </Segment>
                <Segment $ml={5}><Key $w={27}><Indent /></Key><Key $w={27}><Indent flip /></Key></Segment>
                <Slot $w={19} $ml={7}><MergeIcon /></Slot>
                <Label $ml={4} $s={11} $c="#666" $ls={-0.2}>Merge</Label><Caret $ml={9} $c="#aaa" />
              </Row>
            </Group>
            <Group $w={167}>
              <GroupTitle>Number</GroupTitle>
              <Row $pl={5} $mt={2}><Select $w={155}>General<SelectBtn><Caret /></SelectBtn></Select></Row>
              <Row $pl={5} $mt={6}>
                <Segment>
                  <Key $w={27}><MoneyIcon /></Key><Key $w={10}><Caret /></Key><Key $w={28}><Label $s={16} $c="#555">%</Label></Key><Key $w={27}><Comma $b $s={26}>,</Comma></Key>
                </Segment>
                <Segment $ml={5}><Key $w={27}><Decimals /></Key><Key $w={27}><Decimals more /></Key></Segment>
              </Row>
            </Group>
            <Group $w={114}>
              <GroupTitle>Format</GroupTitle>
              <Columns>
                <Big $w={61} $ml={2}>
                  <BigPic $pl={9}><CondIcon /><Caret /></BigPic>
                  <BigLabel $two>
                    <LabelLine>Conditional</LabelLine>
                    <LabelLine $pl={2}>Formatting</LabelLine>
                  </BigLabel>
                </Big>
                <Big $w={45}>
                  <BigPic><StylesIcon /><Caret $ml={-3} /></BigPic>
                  <BigLabel $pl={6} $ls={-0.1}>Styles</BigLabel>
                </Big>
              </Columns>
            </Group>
            <Group $w={58}>
              <GroupTitle>Cells</GroupTitle>
              <BigPic $pl={7}><ActionsIcon /><Caret $ml={-2} /></BigPic>
              <BigLabel $pl={8} $ls={-0.1}>Actions</BigLabel>
            </Group>
            <Group $w={95}>
              <GroupTitle>Themes</GroupTitle>
              <Columns>
                <Big $w={60}>
                  <BigPic $pl={8}><ThemesIcon /><Caret /></BigPic>
                  <BigLabel $pl={9} $ls={-0.2}>Themes</BigLabel>
                </Big>
                <Big $w={34}>
                  <Row $mt={3}><Swatches /><Caret $ml={2} /></Row>
                  <Row $mt={7}><Glyph $c="#4a66c2" $s={18}>Aa</Glyph><Caret $ml={1} /></Row>
                </Big>
              </Columns>
            </Group>
          </Ribbon>
        </RibbonFrame>

        <FormulaBar>
          <NameBox>A1</NameBox>
          <Stepper><UpDown /></Stepper>
          <FxTools><Round /><Round ok /><HalfRound /><Glyph $it $b $s={15} $c="#222">fx</Glyph></FxTools>
          <FormulaDrop><Caret $c="#222" /></FormulaDrop>
        </FormulaBar>
        <Strip />

        <SheetArea>
          <Grid>
            <Corner><Svg w={9} h={8}><path d="M9 0v8H0z" fill="#fff" stroke="#aaa" strokeWidth=".5" /></Svg></Corner>
            {"ABCDEFGH".split("").map((c) => <ColHead key={c} $on={c === "A"}>{c}</ColHead>)}
            <ColHead />
            <RowHead $on>1</RowHead>
            <Selected />
            {days.map((d) => <HeadCell key={d} $lined>{d}</HeadCell>)}
            <Cell />
            {plan.map((week, i) => (
              <React.Fragment key={i}>
                <RowHead>{i + 2}</RowHead>
                <HeadCell>Week {i + 1}</HeadCell>
                {days.map((d, j) => {
                  const entry = week[j];
                  if (!entry) return <Cell key={d} />;
                  return (
                    <Cell key={d} $line="#c3b9fa">
                      <DateText>{entry[0]}:</DateText>
                      <span>{entry[1] === OFF ? OFF : `${entry[1]} miles`}</span>
                    </Cell>
                  );
                })}
                <Cell />
              </React.Fragment>
            ))}
            {[11, 12, 13, 14, 15, 16, 17].map((n) => (
              <React.Fragment key={n}>
                <RowHead>{n}</RowHead>
                {[...days, "a", "b"].map((d) => <Cell key={d} />)}
              </React.Fragment>
            ))}
          </Grid>
          <VScroll><VSplit /><VThumb /></VScroll>
        </SheetArea>

        <Footer>
          <Views>
            <ViewSwitch><ViewBtn $on><NormalView /></ViewBtn><ViewBtn><LayoutView /></ViewBtn></ViewSwitch>
          </Views>
          <FooterMain>
            <SheetBar>
              <NavKeys><NavIcon /></NavKeys>
              <SheetTab>RunningPlan</SheetTab>
              <AddTab><Svg w={9} h={9}><path d="M4.500 0v9M0 4.500h9" stroke="#444" strokeWidth="1.800" /></Svg></AddTab>
              <HScroll><HThumb /><HSplit /></HScroll>
              <ScrollCorner />
            </SheetBar>
            <Status>
              <StatusCell $w={95} $ls={-0.25}>Normal View</StatusCell>
              <StatusCell $w={377} $pl={6}>Ready</StatusCell>
              <StatusCell $w={158} />
              <StatusCell $w={139} $ls={0.3}>Sum=0<Caret $c="#000" $s={5} /></StatusCell>
              <StatusCell $w={35} />
              <StatusCell $w={34} />
              <ResizeCell><Grip /></ResizeCell>
            </Status>
          </FooterMain>
        </Footer>
      </Window>
    </>
  );
}
